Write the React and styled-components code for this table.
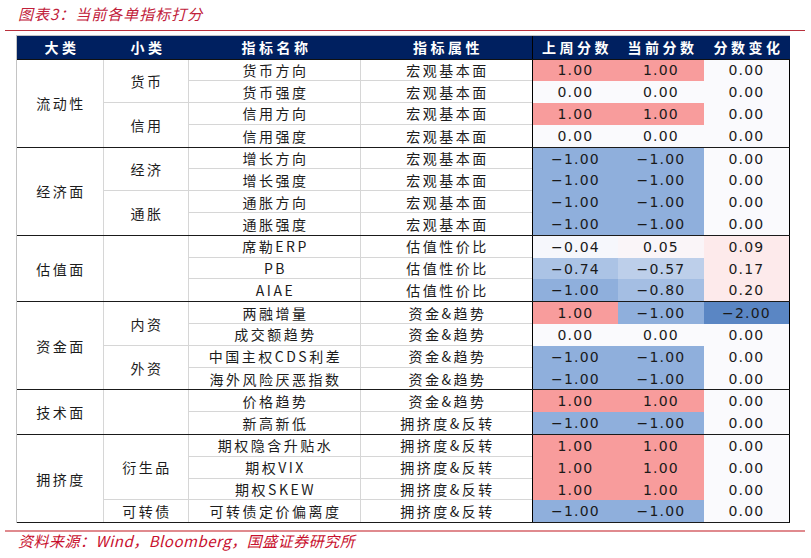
import React from 'react';
import styled, { createGlobalStyle } from 'styled-components';

/**************************************************
    DATA
**************************************************/
const MACRO = '宏观基本面';
const VALUE = '估值性价比';
const FLOW = '资金&趋势';
const CROWD = '拥挤度&反转';

const groups = [
    { name: '流动性', subs: [
        { name: '货币', rows: [['货币方向', MACRO, 1, 1, 0], ['货币强度', MACRO, 0, 0, 0]] },
        { name: '信用', rows: [['信用方向', MACRO, 1, 1, 0], ['信用强度', MACRO, 0, 0, 0]] },
    ] },
    { name: '经济面', subs: [
        { name: '经济', rows: [['增长方向', MACRO, -1, -1, 0], ['增长强度', MACRO, -1, -1, 0]] },
        { name: '通胀', rows: [['通胀方向', MACRO, -1, -1, 0], ['通胀强度', MACRO, -1, -1, 0]] },
    ] },
    { name: '估值面', subs: [
        { name: '', rows: [['席勒ERP', VALUE, -0.04, 0.05, 0.09], ['PB', VALUE, -0.74, -0.57, 0.17], ['AIAE', VALUE, -1, -0.8, 0.2]] },
    ] },
    { name: '资金面', subs: [
        { name: '内资', rows: [['两融增量', FLOW, 1, -1, -2], ['成交额趋势', FLOW, 0, 0, 0]] },
        { name: '外资', rows: [['中国主权CDS利差', FLOW, -1, -1, 0], ['海外风险厌恶指数', FLOW, -1, -1, 0]] },
    ] },
    { name: '技术面', subs: [
        { name: '', rows: [['价格趋势', FLOW, 1, 1, 0], ['新高新低', CROWD, -1, -1, 0]] },
    ] },
    { name: '拥挤度', subs: [
        { name: '衍生品', rows: [['期权隐含升贴水', CROWD, 1, 1, 0], ['期权VIX', CROWD, 1, 1, 0], ['期权SKEW', CROWD, 1, 1, 0]] },
        { name: '可转债', rows: [['可转债定价偏离度', CROWD, -1, -1, 0]] },
    ] },
];

const headers = ['大类', '小类', '指标名称', '指标属性', '上周分数', '当前分数', '分数变化'];

/**************************************************
    COLOUR SCALE
**************************************************/
const BASE = '#fafafd';

const mix = (a, b, t) => {
    const p = (h) => [1, 3, 5].map((i) => parseInt(h.slice(i, i + 2), 16));
    const [ca, cb] = [p(a), p(b)];
    return 'rgb(' + ca.map((c, i) => Math.round(c + (cb[i] - c) * t)).join(',') + ')';
};

const scoreBg = (v) => (v > 0 ? mix(BASE, '#f89c9c', v) : mix(BASE, '#8fafdc', -v));
const changeBg = (v) => (v > 0 ? '#fdeaeb' : v < 0 ? mix(BASE, '#5a86c4', -v / 2) : BASE);
const fmt = (v) => (v < 0 ? '\u2212' : '') + Math.abs(v).toFixed(2);

/**************************************************
    APP
**************************************************/
export default function App() {
    return (
        <Page>
            <GlobalStyle />
            <Title>图表3：当前各单指标打分</Title>
            <TopRule />
            <Table>
                <HeaderRow>
                    {headers.map((h, i) => (
                        <HeaderCell key={h} $split={i === 4}>{h}</HeaderCell>
                    ))}
                </HeaderRow>
                {groups.map((g) => {
                    const total = g.subs.reduce((n, s) => n + s.rows.length, 0);
                    let line = 0;
                    return (
                        <Group key={g.name} $rows={total}>
                            <CatCell $span={total}>{g.name}</CatCell>
                            {g.subs.map((s, si) => {
                                const start = line + 1;
                                line += s.rows.length;
                                const lastSub = si === g.subs.length - 1;
                                return (
                                    <React.Fragment key={si}>
                                        <SubCell $row={start} $span={s.rows.length} $last={lastSub}>{s.name}</SubCell>
                                        {s.rows.map((r, ri) => {
                                            const row = start + ri;
                                            const last = row === total;
                                            return (
                                                <React.Fragment key={r[0]}>
                                                    <NameCell $row={row} $last={last}>{r[0]}</NameCell>
                                                    <AttrCell $row={row} $last={last}>{r[1]}</AttrCell>
                                                    <ScoreCell $row={row} $col={5} style={{ background: scoreBg(r[2]) }}>{fmt(r[2])}</ScoreCell>
                                                    <ScoreCell $row={row} $col={6} style={{ background: scoreBg(r[3]) }}>{fmt(r[3])}</ScoreCell>
                                                    <ScoreCell $row={row} $col={7} style={{ background: changeBg(r[4]) }}>{fmt(r[4])}</ScoreCell>
                                                </React.Fragment>
                                            );
                                        })}
                                    </React.Fragment>
                                );
                            })}
                        </Group>
                    );
                })}
            </Table>
            <BottomRule />
            <Source>资料来源：Wind，Bloomberg，国盛证券研究所</Source>
        </Page>
    );
}

/**************************************************
    STYLES
**************************************************/
const COLS = '87px 85px 172px 171px 86px 86px 86px';
const ROW_H = 21.8;
const CJK = '"Noto Sans CJK SC", "Noto Sans", sans-serif';
const GRID = '#d6d6d6';

const GlobalStyle = createGlobalStyle`
    html, body {
        margin: 0;
        padding: 0;
        background: #ffffff;
    }
    body {
        font-family: ${CJK};
        color: #1c1c1c;
    }
    *, *::before, *::after {
        box-sizing: border-box;
    }
`;

const Page = styled.div`
    width: 811px;
    height: 558px;
    display: flex;
    flex-direction: column;
    overflow: hidden;
`;

const Title = styled.div`
    height: 30px;
    line-height: 28px;
    padding-left: 18px;
    font-size: 15px;
    font-style: italic;
    letter-spacing: 1px;
    color: #c1203a;
`;

const TopRule = styled.div`
    margin-left: 5px;
    width: 800px;
    height: 2px;
    border-top: 1.5px solid #b8303c;
`;

const Table = styled.div`
    margin: 3px 0 0 16px;
    width: fit-content;
    border-left: 1.5px solid #c4c4c4;
    border-top: 1px solid #c4c4c4;
`;

const HeaderRow = styled.div`
    display: grid;
    grid-template-columns: ${COLS};
    height: 23.5px;
    background: #002060;
    border-bottom: 1.5px solid #101010;
`;

const HeaderCell = styled.div`
    display: flex;
    align-items: center;
    justify-content: center;
    color: #ffffff;
    font-size: 14px;
    font-weight: 700;
    letter-spacing: 3.5px;
    padding-left: 3px;
    border-left: ${(p) => (p.$split ? '1.5px solid #000000' : 'none')};
`;

const Group = styled.div`
    display: grid;
    grid-template-columns: ${COLS};
    grid-template-rows: repeat(${(p) => p.$rows}, ${ROW_H}px);
    border-bottom: 1.5px solid #1a1a1a;
`;

const Cell = styled.div`
    display: flex;
    align-items: center;
    justify-content: center;
    font-size: 14px;
    letter-spacing: 2.5px;
    padding-left: 2px;
    white-space: nowrap;
`;

const CatCell = styled(Cell)`
    grid-column: 1;
    grid-row: 1 / span ${(p) => p.$span};
    border-right: 1.5px solid ${GRID};
`;

const SubCell = styled(Cell)`
    grid-column: 2;
    grid-row: ${(p) => p.$row} / span ${(p) => p.$span};
    border-right: 1.5px solid ${GRID};
    border-bottom: ${(p) => (p.$last ? 'none' : `1px solid ${GRID}`)};
`;

const NameCell = styled(Cell)`
    grid-column: 3;
    grid-row: ${(p) => p.$row};
    border-right: 1px solid ${GRID};
    border-bottom: ${(p) => (p.$last ? 'none' : `1px solid ${GRID}`)};
`;

const AttrCell = styled(Cell)`
    grid-column: 4;
    grid-row: ${(p) => p.$row};
    border-bottom: ${(p) => (p.$last ? 'none' : `1px solid ${GRID}`)};
`;

const ScoreCell = styled.div`
    grid-column: ${(p) => p.$col};
    grid-row: ${(p) => p.$row};
    display: flex;
    align-items: center;
    justify-content: center;
    font-family: "DejaVu Sans", "Liberation Sans", sans-serif;
    font-size: 14px;
    letter-spacing: 1.2px;
    color: #1a1a1a;
    border-left: ${(p) => (p.$col === 5 ? '1.5px solid #000000' : 'none')};
    border-right: ${(p) => (p.$col === 7 ? '1.5px solid #000000' : 'none')};
`;

const BottomRule = styled.div`
    margin: 7px 0 0 5px;
    width: 800px;
    height: 2px;
    background: #e08a8e;
`;

const Source = styled.div`
    padding-left: 18px;
    line-height: 17px;
    font-size: 15px;
    font-style: italic;
    letter-spacing: 0.5px;
    color: #c8102e;
`;
